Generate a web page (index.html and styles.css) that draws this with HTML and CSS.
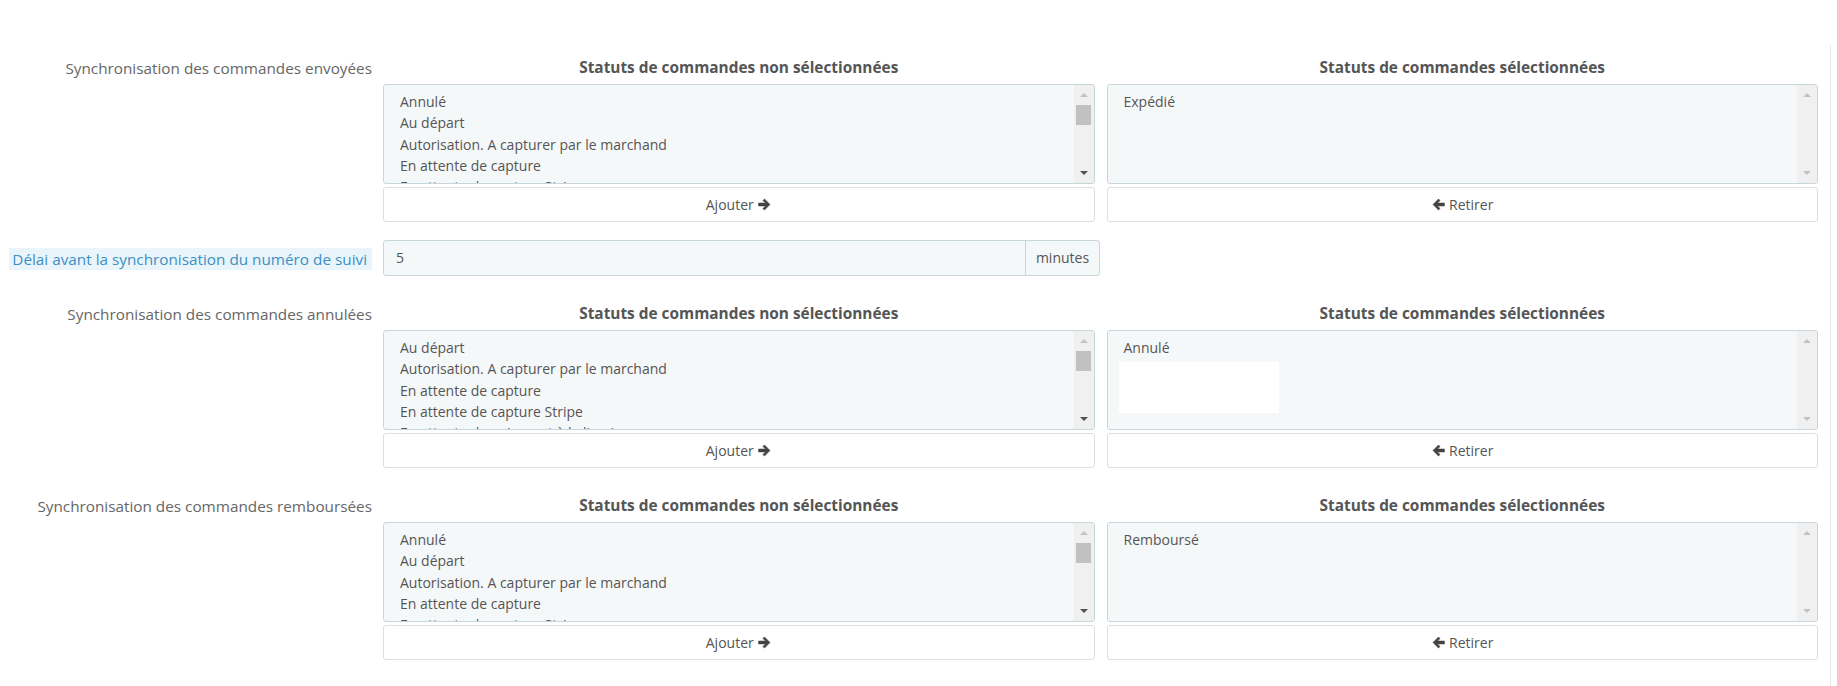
FILE: index.html
```html
<!DOCTYPE html>
<html lang="fr">
<head>
  <meta charset="UTF-8">
  <title>Synchronisation des commandes</title>
  <link rel="stylesheet" href="styles.css">
</head>
<body>

<div class="panel">

  <!-- Commandes envoyées -->
  <div class="form-group swap-group">
    <div class="control-label">Synchronisation des commandes envoyées</div>
    <div class="swap">
      <div class="swap-col">
        <h4>Statuts de commandes non sélectionnées</h4>
        <div class="listbox">
          <div class="options">
            <div>Annulé</div>
            <div>Au départ</div>
            <div>Autorisation. A capturer par le marchand</div>
            <div>En attente de capture</div>
            <div>En attente de capture Stripe</div>
            <div>En attente de paiement à la livraison</div>
          </div>
          <div class="scrollbar">
            <span class="sb-btn"><i class="tri up off"></i></span>
            <span class="thumb"></span>
            <span class="sb-space"></span>
            <span class="sb-btn"><i class="tri down"></i></span>
          </div>
        </div>
        <button class="btn">Ajouter <svg class="ico" viewBox="0 0 14 14"><path d="M1.5 5.7H8L5.6 3.3 7 1.9 12.1 7 7 12.1 5.6 10.7 8 8.3H1.5z"/></svg></button>
      </div>
      <div class="swap-col">
        <h4>Statuts de commandes sélectionnées</h4>
        <div class="listbox">
          <div class="options">
            <div>Expédié</div>
          </div>
          <div class="scrollbar">
            <span class="sb-btn"><i class="tri up off"></i></span>
            <span class="sb-space"></span>
            <span class="sb-btn"><i class="tri down off"></i></span>
          </div>
        </div>
        <button class="btn"><svg class="ico" viewBox="0 0 14 14"><path d="M12.5 5.7H6L8.4 3.3 7 1.9 1.9 7 7 12.1 8.4 10.7 6 8.3h6.5z"/></svg> Retirer</button>
      </div>
    </div>
  </div>

  <!-- Délai -->
  <div class="form-group">
    <div class="control-label"><span class="label-tooltip">Délai avant la synchronisation du numéro de suivi</span></div>
    <div class="input-group">
      <div class="input">5</div>
      <div class="addon">minutes</div>
    </div>
  </div>

  <!-- Commandes annulées -->
  <div class="form-group swap-group">
    <div class="control-label">Synchronisation des commandes annulées</div>
    <div class="swap">
      <div class="swap-col">
        <h4>Statuts de commandes non sélectionnées</h4>
        <div class="listbox">
          <div class="options">
            <div>Au départ</div>
            <div>Autorisation. A capturer par le marchand</div>
            <div>En attente de capture</div>
            <div>En attente de capture Stripe</div>
            <div>En attente de paiement à la livraison</div>
          </div>
          <div class="scrollbar">
            <span class="sb-btn"><i class="tri up off"></i></span>
            <span class="thumb"></span>
            <span class="sb-space"></span>
            <span class="sb-btn"><i class="tri down"></i></span>
          </div>
        </div>
        <button class="btn">Ajouter <svg class="ico" viewBox="0 0 14 14"><path d="M1.5 5.7H8L5.6 3.3 7 1.9 12.1 7 7 12.1 5.6 10.7 8 8.3H1.5z"/></svg></button>
      </div>
      <div class="swap-col">
        <h4>Statuts de commandes sélectionnées</h4>
        <div class="listbox">
          <div class="options">
            <div>Annulé</div>
            <div class="blank"></div>
          </div>
          <div class="scrollbar">
            <span class="sb-btn"><i class="tri up off"></i></span>
            <span class="sb-space"></span>
            <span class="sb-btn"><i class="tri down off"></i></span>
          </div>
        </div>
        <button class="btn"><svg class="ico" viewBox="0 0 14 14"><path d="M12.5 5.7H6L8.4 3.3 7 1.9 1.9 7 7 12.1 8.4 10.7 6 8.3h6.5z"/></svg> Retirer</button>
      </div>
    </div>
  </div>

  <!-- Commandes remboursées -->
  <div class="form-group swap-group">
    <div class="control-label">Synchronisation des commandes remboursées</div>
    <div class="swap">
      <div class="swap-col">
        <h4>Statuts de commandes non sélectionnées</h4>
        <div class="listbox">
          <div class="options">
            <div>Annulé</div>
            <div>Au départ</div>
            <div>Autorisation. A capturer par le marchand</div>
            <div>En attente de capture</div>
            <div>En attente de capture Stripe</div>
            <div>En attente de paiement à la livraison</div>
          </div>
          <div class="scrollbar">
            <span class="sb-btn"><i class="tri up off"></i></span>
            <span class="thumb"></span>
            <span class="sb-space"></span>
            <span class="sb-btn"><i class="tri down"></i></span>
          </div>
        </div>
        <button class="btn">Ajouter <svg class="ico" viewBox="0 0 14 14"><path d="M1.5 5.7H8L5.6 3.3 7 1.9 12.1 7 7 12.1 5.6 10.7 8 8.3H1.5z"/></svg></button>
      </div>
      <div class="swap-col">
        <h4>Statuts de commandes sélectionnées</h4>
        <div class="listbox">
          <div class="options">
            <div>Remboursé</div>
          </div>
          <div class="scrollbar">
            <span class="sb-btn"><i class="tri up off"></i></span>
            <span class="sb-space"></span>
            <span class="sb-btn"><i class="tri down off"></i></span>
          </div>
        </div>
        <button class="btn"><svg class="ico" viewBox="0 0 14 14"><path d="M12.5 5.7H6L8.4 3.3 7 1.9 1.9 7 7 12.1 8.4 10.7 6 8.3h6.5z"/></svg> Retirer</button>
      </div>
    </div>
  </div>

</div>

</body>
</html>
```

FILE: styles.css
```css
body {
  margin: 0;
  padding: 0;
  background-color: #fff;
  font-family: "Open Sans", "Liberation Sans", sans-serif;
  color: #555;
  overflow: hidden;
}

.panel {
  width: 1818px;
  height: calc(100vh - 45px);
  margin-top: 45px;
  padding: 3px 12px 0 0;
  border-right: 1px solid #e6e6e6;
}

.form-group {
  display: grid;
  grid-template-columns: 383px 1fr;
  margin-bottom: 18px;
}

.swap-group {
  padding-top: 10px;
}

.control-label {
  text-align: right;
  padding-right: 11px;
  font-size: 15.3px;
  line-height: 20px;
  color: #666;
  white-space: nowrap;
}

.label-tooltip {
  display: inline-block;
  margin-top: 8px;
  padding: 1px 5px 1px 3px;
  background-color: #e9f5fb;
  color: #3d8fc4;
}

.swap {
  display: grid;
  grid-template-columns: 1fr 1fr;
  gap: 12px;
}

.swap-col h4 {
  margin: 0 0 6px 0;
  font-size: 15.4px;
  line-height: 20px;
  font-weight: bold;
  text-align: center;
  color: #555;
}

.listbox {
  display: flex;
  height: 100px;
  box-sizing: border-box;
  border: 1px solid #c7d6db;
  border-radius: 3px;
  background-color: #f5f8f9;
  overflow: hidden;
}

.options {
  flex: 1;
  padding: 6px 16px 0;
  font-size: 14px;
  line-height: 21.3px;
  color: #555;
  overflow: hidden;
}

.options .blank {
  width: 160px;
  height: 51px;
  margin: 4px 0 0 -5px;
  background-color: #fff;
}

.scrollbar {
  width: 20px;
  background-color: #f0f0f0;
  display: flex;
  flex-direction: column;
  align-items: center;
}

.sb-btn {
  height: 20px;
  width: 100%;
  display: flex;
  align-items: center;
  justify-content: center;
}

.sb-space {
  flex: 1;
}

.thumb {
  width: 15px;
  height: 20px;
  background-color: #c1c1c1;
}

.tri {
  width: 0;
  height: 0;
  border-left: 4px solid transparent;
  border-right: 4px solid transparent;
}

.tri.up {
  border-bottom: 4px solid #505050;
}

.tri.down {
  border-top: 4px solid #505050;
}

.tri.up.off {
  border-bottom-color: #c3c3c3;
}

.tri.down.off {
  border-top-color: #c3c3c3;
}

.btn {
  display: flex;
  align-items: center;
  justify-content: center;
  gap: 3px;
  width: 100%;
  height: 35px;
  margin-top: 3px;
  padding: 0;
  border: 1px solid #dcdfe1;
  border-radius: 3px;
  background-color: #fff;
  font-family: inherit;
  font-size: 14px;
  color: #555;
}

.ico {
  width: 15px;
  height: 15px;
  fill: #444;
  stroke: #444;
  stroke-width: 0.6;
  stroke-linejoin: round;
}

.input-group {
  display: flex;
  height: 36px;
  width: 717px;
  box-sizing: border-box;
  border: 1px solid #c7d6db;
  border-radius: 3px;
  background-color: #f5f8f9;
  font-size: 14px;
  color: #555;
}

.input {
  flex: 1;
  padding-left: 12px;
  line-height: 34px;
}

.addon {
  width: 73px;
  border-left: 1px solid #c7d6db;
  text-align: center;
  line-height: 34px;
}
```
